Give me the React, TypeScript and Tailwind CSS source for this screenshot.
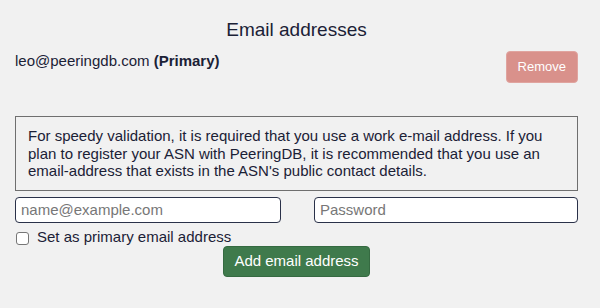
import { useState } from "react";

export default function App() {
  const [primary, setPrimary] = useState(false);

  return (
    <div
      className="w-[600px] h-[308px] bg-[#f1f1f1] text-[#1b2136] overflow-hidden"
      style={{ fontFamily: '"Liberation Sans", Arial, sans-serif' }}
    >
      <div className="pl-[15px] pr-[22px] pt-[19px]">
        {/* Heading */}
        <h2 className="text-center text-[19px] leading-[22px]">Email addresses</h2>

        {/* Current address */}
        <div className="flex items-start justify-between mt-[10px]">
          <div className="text-[15px] leading-[17px] pt-[1px]">
            leo@peeringdb.com <strong className="font-bold">(Primary)</strong>
          </div>
          <button className="h-[32px] px-[11px] rounded-[4px] bg-[#d9918b] border border-[#e0a49f] text-white text-[13px]">
            Remove
          </button>
        </div>

        {/* Notice */}
        <div className="mt-[33px] border border-[#6f6f6f] px-[12px] py-[10px] text-[15px] leading-[17.5px]">
          For speedy validation, it is required that you use a work e-mail address. If you plan to
          register your ASN with PeeringDB, it is recommended that you use an email-address that
          exists in the ASN's public contact details.
        </div>

        {/* Form */}
        <div className="flex justify-between mt-[6px]">
          <input
            type="email"
            placeholder="name@example.com"
            className="w-[266px] h-[26px] px-[5px] bg-white border border-[#2a3149] rounded-[4px] text-[15px] placeholder:text-[#777] outline-none"
          />
          <input
            type="password"
            placeholder="Password"
            className="w-[264px] h-[26px] px-[5px] bg-white border border-[#2a3149] rounded-[4px] text-[15px] placeholder:text-[#777] outline-none"
          />
        </div>

        <label className="flex items-start gap-[8px] mt-[5px] text-[15px] leading-[17px]">
          <input
            type="checkbox"
            checked={primary}
            onChange={() => setPrimary(!primary)}
            className="appearance-none w-[13px] h-[13px] mt-[4px] ml-[1px] bg-white border border-[#767676] rounded-[3px]"
          />
          Set as primary email address
        </label>

        <div className="flex justify-center mt-[1px]">
          <button className="h-[31px] px-[10px] rounded-[4px] bg-[#3f7a4c] border border-[#356a41] text-white text-[15px]">
            Add email address
          </button>
        </div>
      </div>
    </div>
  );
}
